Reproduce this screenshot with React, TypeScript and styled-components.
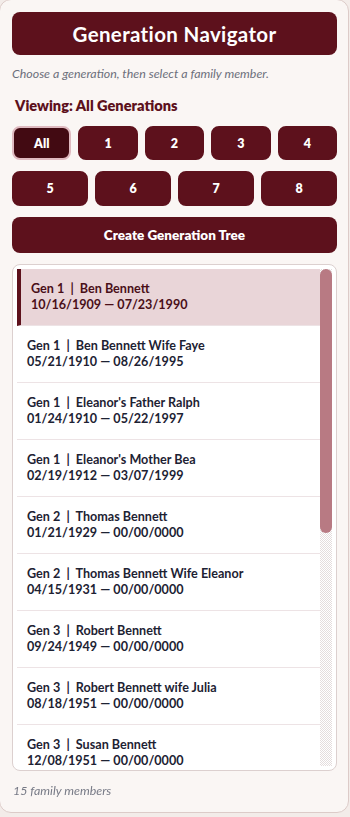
import React, { useRef, useState } from "react";
import styled, { createGlobalStyle } from "styled-components";

const Global = createGlobalStyle`
  html, body { margin: 0; padding: 0; background: #f3ece9; }
  body { font-family: Lato, "Open Sans", sans-serif; -webkit-font-smoothing: antialiased; }
  * { box-sizing: border-box; }
`;

const MAROON = "#5d111c";
const THUMB = 264;

const Card = styled.div`
  width: 350px;
  margin: -1px 0 0 -1px;
  background: #faf6f4;
  border: 1px solid #dccbc8;
  border-radius: 12px;
  padding: 12px 11px 14px 12px;
  display: flex;
  flex-direction: column;
`;

const Header = styled.h1`
  margin: 0;
  height: 43px;
  display: flex;
  align-items: center;
  justify-content: center;
  background: ${MAROON};
  color: #fff;
  border-radius: 8px;
  font-size: 20.5px;
  font-weight: 700;
  letter-spacing: 0.35px;
`;

const Subtitle = styled.p`
  margin: 12px 0 0 0;
  font-size: 12.4px;
  font-style: italic;
  color: #6c6f7b;
  line-height: 14px;
`;

const Viewing = styled.div`
  margin: 16px 0 0 3px;
  font-size: 14.6px;
  font-weight: 800;
  color: ${MAROON};
  line-height: 17px;
`;

const Controls = styled.div`
  margin-top: 12px;
  display: flex;
  flex-direction: column;
  gap: 11px;
`;

const GenRow = styled.div<{ $cols: number }>`
  display: grid;
  grid-template-columns: repeat(${(p) => p.$cols}, 1fr);
  gap: 7px;
`;

const GenButton = styled.button<{ $active?: boolean; $h: number }>`
  height: ${(p) => p.$h}px;
  border: 2px solid ${(p) => (p.$active ? "#dfbac0" : MAROON)};
  background: ${(p) => (p.$active ? "#420a12" : MAROON)};
  color: #fff;
  border-radius: 8px;
  font-family: inherit;
  font-weight: 800;
  font-size: 12.5px;
  cursor: pointer;
  padding: 0;
`;

const CreateButton = styled.button`
  height: 36px;
  border: none;
  background: ${MAROON};
  color: #fff;
  border-radius: 8px;
  font-family: inherit;
  font-weight: 800;
  font-size: 13.5px;
  cursor: pointer;
`;

const ListFrame = styled.div`
  height: 507px;
  background: #fff;
  border: 1px solid #dcd0cf;
  border-radius: 8px;
  padding: 4px;
  display: flex;
`;

const ListScroll = styled.div`
  flex: 1;
  min-width: 0;
  height: 100%;
  overflow-y: auto;
  scrollbar-width: none;
  &::-webkit-scrollbar { display: none; }
`;

const ScrollTrack = styled.div`
  width: 12px;
  flex: none;
  height: 100%;
  background-color: #f4f0f0;
  background-image: conic-gradient(#e4dddd 25%, #ffffff 0 50%, #e4dddd 0 75%, #ffffff 0);
  background-size: 2px 2px;
  display: flex;
  flex-direction: column;
`;

const ScrollThumb = styled.div`
  width: 12px;
  height: ${THUMB}px;
  background: #b87a83;
  border-radius: 6px;
`;

const Item = styled.div<{ $selected?: boolean }>`
  padding: 12px 10px;
  border-left: ${(p) => (p.$selected ? `4px solid ${MAROON}` : "0")};
  background: ${(p) => (p.$selected ? "#e9d5d8" : "#fff")};
  border-bottom: 1px solid #ede3e5;
  color: ${(p) => (p.$selected ? "#4a0f18" : "#1d2233")};
  font-size: 12.6px;
  font-weight: 700;
  line-height: 16px;
  cursor: pointer;
`;

const Line = styled.div`
  white-space: nowrap;
`;

const Footer = styled.div`
  margin: 13px 0 0 1px;
  font-size: 12.4px;
  font-style: italic;
  color: #777a86;
  line-height: 14px;
`;

const members = [
  { g: 1, n: "Ben Bennett", d: "10/16/1909 — 07/23/1990" },
  { g: 1, n: "Ben Bennett Wife Faye", d: "05/21/1910 — 08/26/1995" },
  { g: 1, n: "Eleanor's Father Ralph", d: "01/24/1910 — 05/22/1997" },
  { g: 1, n: "Eleanor's Mother Bea", d: "02/19/1912 — 03/07/1999" },
  { g: 2, n: "Thomas Bennett", d: "01/21/1929 — 00/00/0000" },
  { g: 2, n: "Thomas Bennett Wife Eleanor", d: "04/15/1931 — 00/00/0000" },
  { g: 3, n: "Robert Bennett", d: "09/24/1949 — 00/00/0000" },
  { g: 3, n: "Robert Bennett wife Julia", d: "08/18/1951 — 00/00/0000" },
  { g: 3, n: "Susan Bennett", d: "12/08/1951 — 00/00/0000" },
  { g: 3, n: "Susan Bennett Husband Mark", d: "03/02/1950 — 00/00/0000" },
  { g: 4, n: "Michael Bennett", d: "06/11/1975 — 00/00/0000" },
  { g: 4, n: "Emily Bennett", d: "10/30/1978 — 00/00/0000" },
  { g: 4, n: "Daniel Carter", d: "02/14/1980 — 00/00/0000" },
  { g: 5, n: "Olivia Bennett", d: "07/09/2004 — 00/00/0000" },
  { g: 5, n: "Noah Bennett", d: "11/21/2007 — 00/00/0000" },
];

export default function App() {
  const [gen, setGen] = useState<string>("All");
  const [sel, setSel] = useState(0);
  const [offset, setOffset] = useState(0);
  const scrollRef = useRef<HTMLDivElement>(null);

  const onScroll = () => {
    const el = scrollRef.current;
    if (!el) return;
    const max = el.scrollHeight - el.clientHeight;
    const ratio = max > 0 ? el.scrollTop / max : 0;
    setOffset(ratio * (el.clientHeight - THUMB));
  };

  return (
    <>
      <Global />
      <Card>
        <Header>Generation Navigator</Header>
        <Subtitle>Choose a generation, then select a family member.</Subtitle>
        <Viewing>Viewing: All Generations</Viewing>
        <Controls>
          <GenRow $cols={5}>
            {["All", "1", "2", "3", "4"].map((g) => (
              <GenButton key={g} $h={34} $active={gen === g} onClick={() => setGen(g)}>
                {g}
              </GenButton>
            ))}
          </GenRow>
          <GenRow $cols={4}>
            {["5", "6", "7", "8"].map((g) => (
              <GenButton key={g} $h={35} $active={gen === g} onClick={() => setGen(g)}>
                {g}
              </GenButton>
            ))}
          </GenRow>
          <CreateButton>Create Generation Tree</CreateButton>
          <ListFrame>
            <ListScroll ref={scrollRef} onScroll={onScroll}>
              {members.map((m, i) => (
                <Item key={i} $selected={sel === i} onClick={() => setSel(i)}>
                  <Line>Gen {m.g} &nbsp;|&nbsp; {m.n}</Line>
                  <Line>{m.d}</Line>
                </Item>
              ))}
            </ListScroll>
            <ScrollTrack>
              <ScrollThumb style={{ marginTop: offset }} />
            </ScrollTrack>
          </ListFrame>
        </Controls>
        <Footer>15 family members</Footer>
      </Card>
    </>
  );
}
